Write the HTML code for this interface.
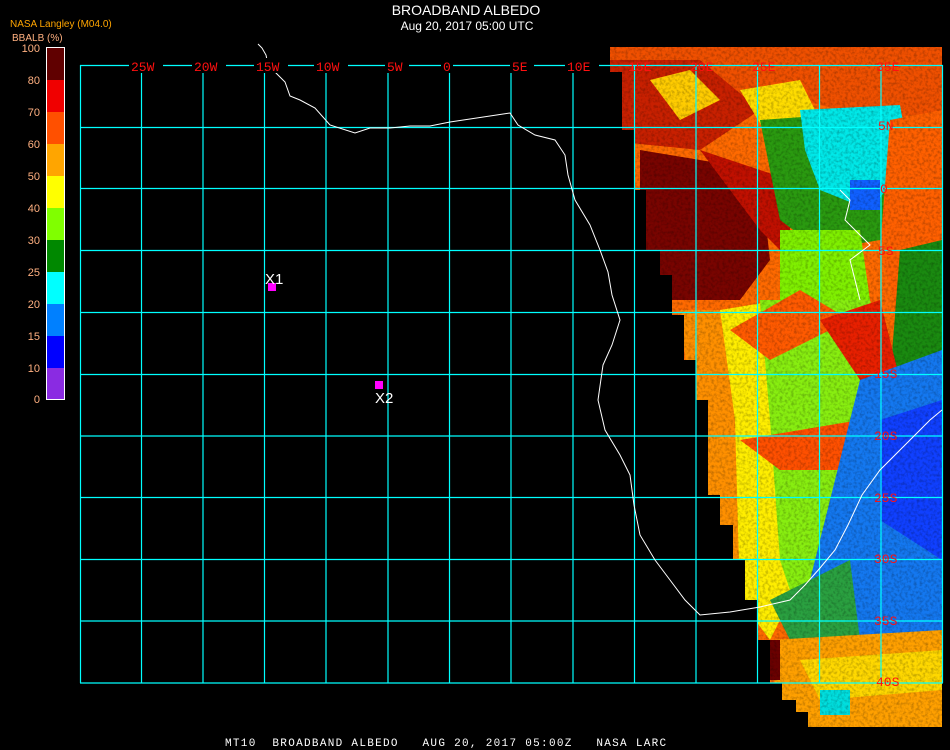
<!DOCTYPE html>
<html><head><meta charset="utf-8"><style>
body{margin:0;background:#000;width:950px;height:750px;overflow:hidden;font-family:"Liberation Sans",sans-serif}
</style></head><body>
<svg width="950" height="750" viewBox="0 0 950 750" xmlns="http://www.w3.org/2000/svg" style="position:absolute;left:0;top:0">
<defs>
<clipPath id="dc"><polygon points="610,47 942,47 942,727 808,727 808,712 796,712 796,700 782,700 782,683 770,683 770,640 758,640 758,600 745,600 745,560 733,560 733,525 720,525 720,495 708,495 708,400 696,400 696,360 684,360 684,315 672,315 672,275 660,275 660,250 646,250 646,190 634,190 634,130 622,130 622,72 610,72"/></clipPath>
<filter id="nz" x="0" y="0" width="100%" height="100%"><feTurbulence type="fractalNoise" baseFrequency="0.35" numOctaves="2" seed="3"/><feColorMatrix type="matrix" values="0 0 0 0 0  0 0 0 0 0  0 0 0 0 0  0 0 0 -2.2 1.3"/></filter>
</defs>
<g clip-path="url(#dc)">
<rect x="600" y="40" width="350" height="700" fill="#ff6a00"/>
<polygon points="600,40 950,40 950,110 880,120 780,95 700,120 600,110" fill="#f05000"/>
<polygon points="600,60 700,60 760,110 700,150 600,140" fill="#c82000"/>
<polygon points="650,80 690,70 720,100 680,120" fill="#ffcc00"/>
<polygon points="640,150 760,170 770,260 740,300 660,300 640,240" fill="#780400"/>
<polygon points="700,150 790,180 790,260 760,230" fill="#c01000"/>
<polygon points="740,90 800,80 820,120 770,140" fill="#ffdd00"/>
<polygon points="760,120 900,110 920,200 880,240 820,250 780,220" fill="#2a9a10"/>
<polygon points="800,110 900,105 910,160 870,210 820,190 805,150" fill="#00e8e8"/>
<polygon points="850,180 880,180 880,210 850,210" fill="#1060ff"/>
<polygon points="890,120 942,110 942,330 900,320 880,250" fill="#ff6000"/>
<polygon points="900,250 942,240 942,360 890,380" fill="#1a8a10"/>
<polygon points="780,230 860,230 870,300 840,320 780,310" fill="#80f000"/>
<polygon points="680,310 760,310 760,590 720,590 700,500 690,400" fill="#ff9000"/>
<polygon points="720,310 780,300 800,340 790,600 770,640 740,600 735,420" fill="#ffee00"/>
<polygon points="760,300 870,300 880,340 860,470 850,580 800,620 780,560 770,420" fill="#88ee10"/>
<polygon points="730,330 800,290 850,320 770,360" fill="#ff5a00"/>
<polygon points="740,440 860,420 870,470 780,470" fill="#ff5000"/>
<polygon points="820,320 880,300 900,380 860,380" fill="#e82000"/>
<polygon points="860,380 942,350 942,650 840,640 800,620" fill="#1478f0"/>
<polygon points="880,420 942,400 942,560 880,520" fill="#1040ff"/>
<polygon points="770,600 850,560 860,640 800,660" fill="#2aa040"/>
<polygon points="770,640 942,630 942,730 780,730" fill="#ffa000"/>
<polygon points="800,660 942,650 942,690 820,700" fill="#ffd800"/>
<rect x="760" y="640" width="20" height="40" fill="#6a0000"/>
<rect x="820" y="690" width="30" height="25" fill="#00dede"/>
<rect x="600" y="40" width="350" height="700" fill="#000" filter="url(#nz)" opacity="0.25"/>
</g>
<g stroke="#00ffff" stroke-width="1.2" fill="none">
<path d="M80.5 65V683M141.5 65V683M203 65V683M264.5 65V683M326 65V683M388 65V683M449.5 65V683M511 65V683M573 65V683M634.5 65V683M696 65V683M757.5 65V683M819.5 65V683M881 65V683M942.5 65V683"/>
<path d="M80 65.5H943M80 127.5H943M80 188.5H943M80 250.5H943M80 312.5H943M80 374.5H943M80 436H943M80 497.5H943M80 559.5H943M80 621H943M80 683H943"/>
</g>
<polyline fill="none" stroke="#fff" stroke-width="1" points="258,44 262,48 266,55 268,65 285,82 290,96 300,100 315,108 330,125 355,133 370,128 390,128 410,126 430,126 450,122 470,119 490,116 510,113 518,125 535,135 555,140 565,155 568,175 575,200 590,225 600,250 608,272 612,295 620,320 612,345 603,365 598,400 605,430 620,455 630,475 634,505 640,535 655,560 670,580 685,600 700,615 730,612 760,607 790,600 805,585 820,568 835,550 848,525 862,495 880,470 905,445 930,420 942,410"/>
<polyline fill="none" stroke="#fff" stroke-width="1" points="840,190 850,200 845,220 860,235 870,245 850,260 855,280 860,300"/>
<g fill="#000">
<rect x="129" y="58" width="34" height="15"/><rect x="192" y="58" width="34" height="15"/><rect x="254" y="58" width="34" height="15"/><rect x="314" y="58" width="34" height="15"/><rect x="385" y="58" width="24" height="15"/><rect x="441" y="58" width="12" height="15"/><rect x="510" y="58" width="24" height="15"/><rect x="565" y="58" width="34" height="15"/>
</g>
<g font-family="Liberation Mono,monospace" font-size="13" fill="#ff1010">
<text x="131" y="71">25W</text><text x="194" y="71">20W</text><text x="256" y="71">15W</text><text x="316" y="71">10W</text><text x="387" y="71">5W</text><text x="443" y="71">0</text><text x="512" y="71">5E</text><text x="567" y="71">10E</text><text x="628" y="71">15E</text><text x="690" y="71">20E</text><text x="752" y="71">25E</text><text x="876" y="71">35E</text>
<text x="878" y="130">5N</text><text x="880" y="193">0</text><text x="878" y="255">5S</text><text x="874" y="378">15S</text><text x="874" y="440">20S</text><text x="874" y="502">25S</text><text x="874" y="563">30S</text><text x="874" y="625">35S</text><text x="876" y="686">40S</text>
</g>
<g stroke="#fff" stroke-width="1"><rect x="46.5" y="47.5" width="18" height="352" fill="none"/></g>
<rect x="47" y="48" width="17" height="32" fill="#600000"/>
<rect x="47" y="80" width="17" height="32" fill="#f00000"/>
<rect x="47" y="112" width="17" height="32" fill="#ff5000"/>
<rect x="47" y="144" width="17" height="32" fill="#ffa500"/>
<rect x="47" y="176" width="17" height="32" fill="#ffff00"/>
<rect x="47" y="208" width="17" height="32" fill="#80ff00"/>
<rect x="47" y="240" width="17" height="32" fill="#008800"/>
<rect x="47" y="272" width="17" height="32" fill="#00ffff"/>
<rect x="47" y="304" width="17" height="32" fill="#0080ff"/>
<rect x="47" y="336" width="17" height="32" fill="#0000ff"/>
<rect x="47" y="368" width="17" height="31" fill="#8a2be2"/>
<g font-size="11" fill="#ffb080" text-anchor="end">
<text x="40" y="52">100</text><text x="40" y="84">80</text><text x="40" y="116">70</text><text x="40" y="148">60</text><text x="40" y="180">50</text><text x="40" y="212">40</text><text x="40" y="244">30</text><text x="40" y="276">25</text><text x="40" y="308">20</text><text x="40" y="340">15</text><text x="40" y="372">10</text><text x="40" y="403">0</text>
</g>
<text x="10" y="27" font-size="10" fill="#ffa500">NASA Langley (M04.0)</text>
<text x="12" y="41" font-size="10" fill="#ffb080">BBALB (%)</text>
<text x="466" y="15" font-size="14" fill="#fff" text-anchor="middle">BROADBAND ALBEDO</text>
<text x="467" y="30" font-size="12" fill="#fff" text-anchor="middle">Aug 20, 2017 05:00 UTC</text>
<rect x="268" y="283" width="8" height="8" fill="#ff00ff"/>
<text x="265" y="284" font-size="15" fill="#fff">X1</text>
<rect x="375" y="381" width="8" height="8" fill="#ff00ff"/>
<text x="375" y="403" font-size="15" fill="#fff">X2</text>
<text x="225" y="746" font-family="Liberation Mono,monospace" font-size="11" fill="#fff" letter-spacing="1.3" xml:space="preserve">MT10  BROADBAND ALBEDO   AUG 20, 2017 05:00Z   NASA LARC</text>
</svg>
</body></html>
